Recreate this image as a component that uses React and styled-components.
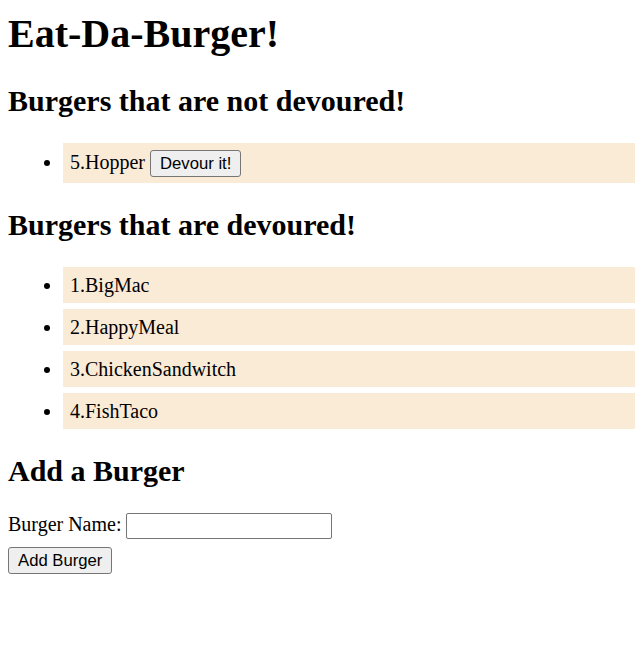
import React from "react";
import styled, { createGlobalStyle } from "styled-components";

const GlobalStyle = createGlobalStyle`
  body {
    margin: 0;
    background: #fff;
    color: #000;
    font-family: "Liberation Serif", "Times New Roman", serif;
    font-size: 20px;
  }
`;

const notDevoured = [{ id: 5, name: "Hopper" }];
const devoured = [
  { id: 1, name: "BigMac" },
  { id: 2, name: "HappyMeal" },
  { id: 3, name: "ChickenSandwitch" },
  { id: 4, name: "FishTaco" },
];

const App = () => {
  return (
    <Page>
      <GlobalStyle />
      <Title>Eat-Da-Burger!</Title>

      <Heading>Burgers that are not devoured!</Heading>
      <BurgerList>
        {notDevoured.map((b) => (
          <BurgerItem key={b.id}>
            {b.id}.{b.name} <Button>Devour it!</Button>
          </BurgerItem>
        ))}
      </BurgerList>

      <Heading>Burgers that are devoured!</Heading>
      <BurgerList>
        {devoured.map((b) => (
          <BurgerItem key={b.id}>
            {b.id}.{b.name}
          </BurgerItem>
        ))}
      </BurgerList>

      <Heading>Add a Burger</Heading>
      <Form onSubmit={(e) => e.preventDefault()}>
        <FieldRow>
          <label htmlFor="burger">Burger Name:</label>
          <TextInput id="burger" type="text" />
        </FieldRow>
        <Button type="submit">Add Burger</Button>
      </Form>
    </Page>
  );
};

export default App;

const Page = styled.div`
  padding: 10px 0 20px 8px;
`;

const Title = styled.h1`
  font-size: 40px;
  font-weight: bold;
  margin: 0 0 27px;
`;

const Heading = styled.h2`
  font-size: 30px;
  font-weight: bold;
  margin: 25px 0;
`;

const BurgerList = styled.ul`
  margin: 20px 0;
  padding-left: 50px;
`;

const BurgerItem = styled.li`
  background: antiquewhite;
  margin: 6px 0 6px 5px;
  padding: 6.5px 7px;
  line-height: 23px;
`;

const Button = styled.button`
  font-family: "Liberation Sans", Arial, sans-serif;
  font-size: 16.7px;
  line-height: 21px;
  padding: 2px 9px;
  color: #000;
  background: #efefef;
  border: 1px solid #767676;
  border-radius: 3px;
`;

const Form = styled.form`
  display: flex;
  flex-direction: column;
  align-items: flex-start;
  gap: 8px;
`;

const FieldRow = styled.div`
  display: flex;
  align-items: baseline;
  gap: 4px;
`;

const TextInput = styled.input`
  box-sizing: border-box;
  width: 206px;
  height: 26px;
  border: 1px solid #767676;
  border-radius: 2px;
  font-size: 16px;
  padding: 1px 3px;
`;
